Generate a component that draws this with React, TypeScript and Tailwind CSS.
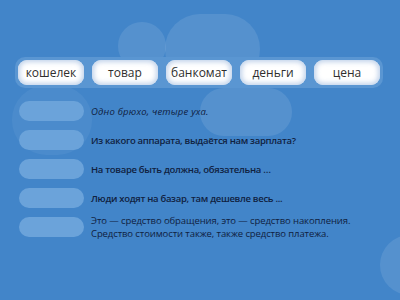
import React from 'react';

const words = ['кошелек', 'товар', 'банкомат', 'деньги', 'цена'];

const questions = [
  { lines: ['Одно брюхо, четыре уха.'], style: 'italic tracking-[0.2px]' },
  { lines: ['Из какого аппарата, выдаётся нам зарплата?'], style: 'font-semibold tracking-[-0.3px]' },
  { lines: ['На товаре быть должна, обязательна …'], style: 'font-semibold tracking-[-0.3px]' },
  { lines: ['Люди ходят на базар, там дешевле весь ...'], style: 'font-semibold tracking-[-0.3px]' },
  {
    lines: ['Это — средство обращения, это — средство накопления.', 'Средство стоимости также, также средство платежа.'],
    style: 'font-medium tracking-[-0.1px] -my-[3px]',
  },
];

const Chip: React.FC<{ label: string }> = ({ label }) => (
  <div className="h-[25px] w-[66px] rounded-[9px] bg-white flex items-center justify-center shadow-[inset_0_0_5px_2px_rgba(185,205,232,0.9)]">
    <span className="text-[12px] text-[#2e2e2e]">{label}</span>
  </div>
);

export default function App() {
  return (
    <div
      className="relative w-[400px] h-[300px] overflow-hidden bg-[#4285c9]"
      style={{ fontFamily: '"Open Sans", "Liberation Sans", sans-serif' }}
    >
      {/* soft background clouds */}
      <div className="absolute left-[118px] top-[22px] w-[48px] h-[48px] rounded-full bg-white/10" />
      <div className="absolute left-[165px] top-[14px] w-[95px] h-[70px] rounded-full bg-white/10" />
      <div className="absolute left-[12px] top-[85px] w-[80px] h-[70px] rounded-full bg-white/5" />
      <div className="absolute left-[200px] top-[88px] w-[92px] h-[48px] rounded-full bg-white/10" />
      <div className="absolute left-[380px] top-[235px] w-[60px] h-[60px] rounded-full bg-white/10" />

      <div className="relative flex flex-col pt-[57px]">
        <div className="ml-[15px] mr-[17px] h-[31px] rounded-[10px] bg-[#5a96d2] flex items-center justify-between px-[3px]">
          {words.map((w) => (
            <Chip key={w} label={w} />
          ))}
        </div>

        <div className="mt-[13px] flex flex-col gap-[9px] pl-[19px]">
          {questions.map((q, i) => (
            <div key={i} className="flex items-center gap-[7px]">
              <div className="h-[20px] w-[65px] shrink-0 rounded-[10px] bg-[#6ba3da]" />
              <div className={`flex flex-col text-[9.5px] leading-[13px] text-[#10213f] ${q.style}`}>
                {q.lines.map((l) => (
                  <span key={l}>{l}</span>
                ))}
              </div>
            </div>
          ))}
        </div>
      </div>
    </div>
  );
}
